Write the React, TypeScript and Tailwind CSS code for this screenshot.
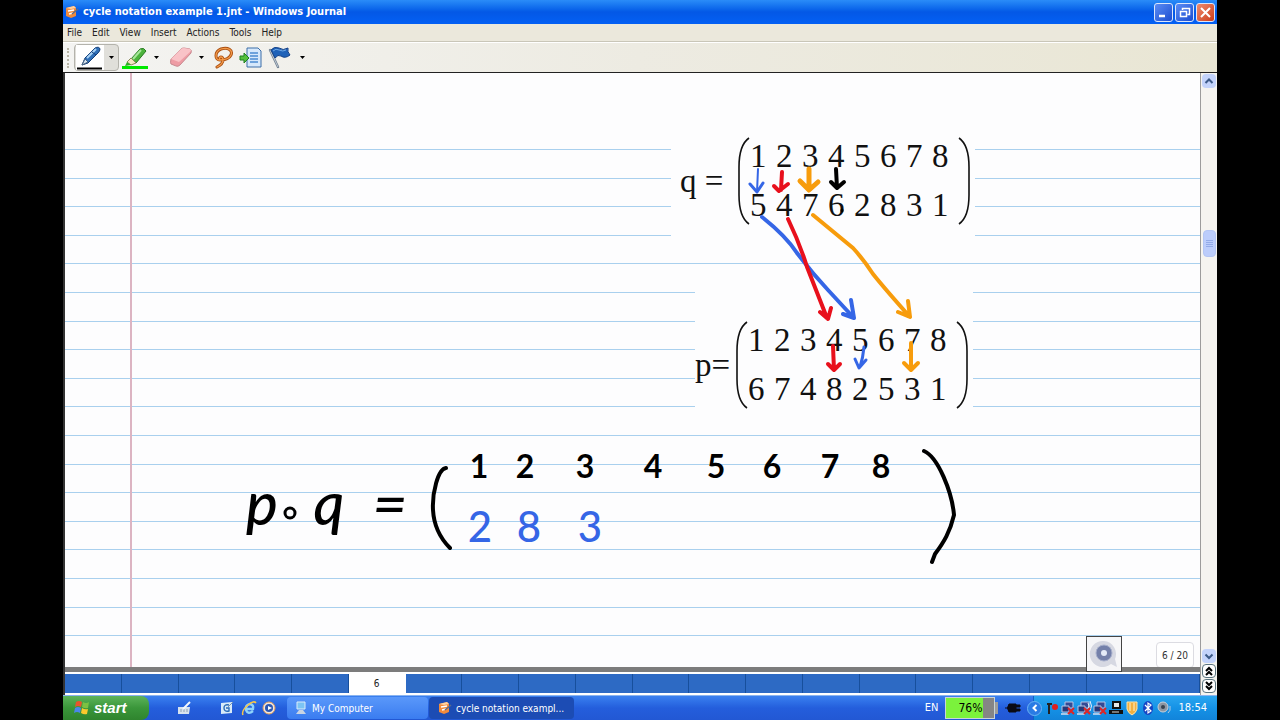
import { useState } from "react"
import type { ReactNode } from "react"
import { clsx } from "clsx"

const menus = ["File", "Edit", "View", "Insert", "Actions", "Tools", "Help"]

const PAGE_COUNT = 20
const RULE_COUNT = 17

const BLUE = "#3566e6"
const RED = "#e8101c"
const ORANGE = "#f79c0c"
const BLACK = "#000000"

interface Stroke {
  color: string
  width: number
  d: string
}

const strokes: Stroke[] = [
  // q: top row to bottom row
  { color: BLUE, width: 2, d: "M758 169L757 192" },
  { color: BLUE, width: 3, d: "M750 184L757 192L763 183" },
  { color: RED, width: 4, d: "M782 172L781 190M774 186L779 191L788 184" },
  { color: ORANGE, width: 5, d: "M809 169V189M800 181L809 190L818 182" },
  { color: BLACK, width: 4, d: "M836 169L837 188M831 182L837 188L844 182" },
  // q down to p
  { color: BLUE, width: 4, d: "M762 217Q786 236 797 253Q812 273 828 290L853 317M843 314L854 318L851 300" },
  { color: RED, width: 4, d: "M788 219Q800 244 807 267L827 318M820 312L828 319L831 308" },
  { color: ORANGE, width: 4, d: "M813 215L853 248Q864 260 873 274Q885 289 910 317M898 312L910 317L908 301" },
  // p: top row to bottom row
  { color: RED, width: 4, d: "M833 346L834 370M828 364L834 370L840 364" },
  { color: BLUE, width: 3, d: "M864 347Q863 358 860 367M855 359L859 368L866 360" },
  { color: ORANGE, width: 4, d: "M911 343V369M904 363L911 370L918 363" },
  // brackets of the result
  { color: BLACK, width: 4, d: "M446 468C438 469 432 493 433 510C434 528 442 540 450 548" },
  { color: BLACK, width: 4, d: "M924 451C938 457 952 492 954 515C950 532 944 542 935 554L932 562" },
  // pen tip
  { color: BLACK, width: 3, d: "M842 210V211" },
]

const topRow = [
  { x: 479, text: "1" },
  { x: 525, text: "2" },
  { x: 585, text: "3" },
  { x: 653, text: "4" },
  { x: 716, text: "5" },
  { x: 772, text: "6" },
  { x: 830, text: "7" },
  { x: 881, text: "8" },
]

const bottomRow = [
  { x: 480, text: "2" },
  { x: 529, text: "8" },
  { x: 590, text: "3" },
]

function TitleIcon() {
  return (
    <svg viewBox="0 0 14 14" className="size-[14px] shrink-0" aria-hidden="true">
      <path d="M1 3L9 1L11 3V11L6 13L1 11Z" fill="#f08a3c" />
      <path d="M1 3L9 1L11 3L6 4Z" fill="#ffd2a0" />
      <path d="M3 6L9 5M4 9L8 8" stroke="#fff" strokeWidth="1.3" />
      <path d="M7 9L13 4" stroke="#5b6c8c" strokeWidth="1.5" />
    </svg>
  )
}

function PenIcon() {
  return (
    <svg viewBox="0 0 28 24" className="h-6 w-7" aria-hidden="true">
      <path d="M6 19L9 12L19 2Q23 0 24 3Q24 5 22 7L12 17Z" fill="#2f6fb8" stroke="#123d78" />
      <path d="M11 12L20 3" stroke="#a9d2f5" strokeWidth="2" />
      <path d="M6 19L9 13L12 16Z" fill="#dce8f2" stroke="#4a6480" />
      <path d="M16 6L20 9" stroke="#123d78" />
      <path d="M1 22.5H26" stroke="#000" strokeWidth="2" />
    </svg>
  )
}

function HighlighterIcon() {
  return (
    <svg viewBox="0 0 28 24" className="h-6 w-7" aria-hidden="true">
      <path d="M10 13L19 3Q23 1 25 5L15 17Z" fill="#4cb33c" stroke="#277a20" />
      <path d="M12 13L20 4" stroke="#a6e69a" strokeWidth="2" />
      <path d="M6 16L10 12L15 17L10 19Z" fill="#f3e8c4" stroke="#8b8a5a" />
      <path d="M4 20L6 16L10 19Z" fill="#2fae26" />
      <path d="M1 21.5H27" stroke="#00e800" strokeWidth="3" />
    </svg>
  )
}

function EraserIcon() {
  return (
    <svg viewBox="0 0 28 24" className="h-6 w-7" aria-hidden="true">
      <path d="M5 13L15 3Q16 2 18 2L24 3Q26 4 25 7L14 19Q12 21 10 20L5 18Q4 17 5 13Z" fill="#ee9ca4" stroke="#c88a90" />
      <path d="M5 13L15 3Q16 2 18 2L24 3Q26 4 24 6L13 16Z" fill="#f9c3c7" />
    </svg>
  )
}

function LassoIcon() {
  return (
    <svg viewBox="0 0 24 24" className="size-6" fill="none" aria-hidden="true">
      <path
        d="M9 14C4 14 3 6 10 3C17 1 22 4 20 9C18 13 14 14 9 14M9 14C7 10 12 10 12 14C12 17 10 19 6 21"
        stroke="#a94e10"
        strokeWidth="3"
        strokeLinecap="round"
      />
      <path
        d="M9 14C4 14 3 6 10 3C17 1 22 4 20 9C18 13 14 14 9 14M9 14C7 10 12 10 12 14C12 17 10 19 6 21"
        stroke="#f39a4a"
        strokeWidth="1.3"
        strokeLinecap="round"
      />
    </svg>
  )
}

function InsertPageIcon() {
  return (
    <svg viewBox="0 0 24 24" className="size-6" aria-hidden="true">
      <path d="M8 2H19L22 5V21H8Z" fill="#d6e8fb" stroke="#3d6ea8" />
      <path d="M11 7H19M11 10H19M11 13H19M11 16H19" stroke="#4b8bd2" strokeWidth="1.5" />
      <path d="M1 10H5V7L10 12L5 17V14H1Z" fill="#54c03c" stroke="#1f8020" />
    </svg>
  )
}

function FlagIcon() {
  return (
    <svg viewBox="0 0 28 24" className="h-6 w-7" aria-hidden="true">
      <path d="M3 4L11 21" stroke="#6f7f90" strokeWidth="2.4" strokeLinecap="round" />
      <path d="M3 4L11 21" stroke="#d4dde6" strokeWidth="0.8" />
      <path d="M4 4Q7 0 12 2Q16 5 21 2Q20 6 23 9Q18 13 14 10Q11 8 8 12Z" fill="#1f62b8" stroke="#123f86" />
      <path d="M6 5Q9 2 12 4Q16 6 19 4" stroke="#6ea8e6" fill="none" />
    </svg>
  )
}

interface ToolButtonProps {
  label: string
  menu?: boolean
  active?: boolean
  children: ReactNode
}

function ToolButton({ label, menu, active, children }: ToolButtonProps) {
  return (
    <button
      type="button"
      aria-label={label}
      aria-pressed={active}
      className={clsx(
        "flex h-[27px] items-center justify-between border pl-px",
        menu ? "w-[45px] pr-1" : "w-7",
        active ? "rounded-sm border-[#b4b3ac] bg-[#e0dfda]" : "border-transparent",
      )}
    >
      <span className={clsx("flex h-full items-center", active && "bg-white")}>{children}</span>
      {menu && (
        <svg viewBox="0 0 5 3" className="h-[3px] w-[5px]" aria-hidden="true">
          <path d="M0 0H5L2.5 3Z" fill="#000" />
        </svg>
      )}
    </button>
  )
}

function WindowButton({ label, close, children }: { label: string; close?: boolean; children: ReactNode }) {
  return (
    <button
      type="button"
      aria-label={label}
      className={clsx(
        "flex size-[19px] items-center justify-center rounded-[3px] border border-[#dbe6fb]",
        close ? "bg-linear-to-br from-[#ee8a6c] to-[#cc3a14]" : "bg-linear-to-br from-[#5c8cf4] to-[#1c4cd0]",
      )}
    >
      <svg viewBox="0 0 13 13" className="size-[13px]" fill="none" stroke="#fff" aria-hidden="true">
        {children}
      </svg>
    </button>
  )
}

function Paren({ right }: { right?: boolean }) {
  return (
    <svg viewBox="0 0 13 88" className="h-[88px] w-[13px] shrink-0" fill="none" stroke="#111" aria-hidden="true">
      <path d={right ? "M1 1Q11 8 11 30V58Q11 80 1 87" : "M12 1Q2 8 2 30V58Q2 80 12 87"} strokeWidth="1.6" />
    </svg>
  )
}

function Permutation({ name, rows, className }: { name: ReactNode; rows: string[]; className: string }) {
  return (
    <div
      className={clsx(
        "absolute flex items-center bg-[#fdfdfe] pt-6 pb-5 font-['Liberation_Serif',serif] text-[33px] leading-[49px] text-[#111]",
        className,
      )}
    >
      {name}
      <Paren />
      <div className="grid grid-cols-[repeat(8,26px)]">
        {rows.map((row) => row.split("").map((digit) => <span key={row + digit}>{digit}</span>))}
      </div>
      <Paren right />
    </div>
  )
}

function Ink() {
  return (
    <svg
      className="absolute inset-0 size-full font-['Lato',sans-serif] font-bold"
      strokeLinecap="round"
      strokeLinejoin="round"
    >
      <g transform="translate(-65 -73)">
        {strokes.map((s) => (
          <path key={s.d} d={s.d} fill="none" stroke={s.color} strokeWidth={s.width} />
        ))}
        <g textAnchor="middle">
          <g className="text-[60px] font-medium italic">
            <text x="262" y="525">p</text>
            <text x="329" y="525">q</text>
            <text x="390" y="525">=</text>
          </g>
          <circle cx="290" cy="513" r="5" fill="none" stroke="#000" strokeWidth="3" />
          <g className="text-[32px]">
            {topRow.map((n) => (
              <text key={n.text} x={n.x} y="478">{n.text}</text>
            ))}
          </g>
          <g className="text-[42px] font-medium" fill={BLUE}>
            {bottomRow.map((n) => (
              <text key={n.text} x={n.x} y="542">{n.text}</text>
            ))}
          </g>
        </g>
      </g>
    </svg>
  )
}

function NotePage({ page }: { page: number }) {
  return (
    <main className="relative min-h-0 flex-1 overflow-hidden bg-[#fdfdfe]">
      <div className="flex h-full flex-col pt-[76px] pb-[31px]">
        {Array.from({ length: RULE_COUNT }, (_, i) => (
          <div key={i} className="flex-1 border-t border-[#a9d0ee]" />
        ))}
        <div className="h-px bg-[#a9d0ee]" />
      </div>
      <div className="absolute inset-y-0 left-[65px] w-[2px] bg-[#dcb4c2]" />
      <Permutation
        className="top-[35px] left-[606px] pr-1 pl-[9px]"
        name={<span className="w-[57px]">q =</span>}
        rows={["12345678", "54762831"]}
      />
      <Permutation
        className="top-[219px] left-[630px] pr-1"
        name={<span className="w-10">p=</span>}
        rows={["12345678", "67482531"]}
      />
      <Ink />
      <div className="absolute right-[6px] -bottom-px flex h-[26px] w-[38px] items-center justify-center rounded-sm border border-[#dcdce2] bg-white text-[10px] text-[#333]">
        {page} / {PAGE_COUNT}
      </div>
    </main>
  )
}

function ScrollButton({ label, d, page }: { label: string; d: string; page?: boolean }) {
  return (
    <button
      type="button"
      aria-label={label}
      className={clsx(
        "flex size-[14px] shrink-0 items-center justify-center rounded-sm",
        page ? "border border-[#5b7480] bg-white" : "bg-[#c3d3fb]",
      )}
    >
      <svg viewBox="0 0 10 10" className="size-[10px] shrink-0" fill="none" stroke={page ? "#000" : "#3c5a88"} strokeWidth="2" aria-hidden="true">
        <path d={d} />
      </svg>
    </button>
  )
}

function ScrollBar() {
  return (
    <div className="flex w-[17px] shrink-0 flex-col items-center border-l border-[#9c9c9c] bg-[#f5f4f0] pt-px pb-[2px]">
      <ScrollButton label="Scroll up" d="M1.5 7L5 3.5L8.5 7" />
      <div className="flex w-full flex-1 flex-col items-center">
        <div className="grow-[142]" />
        <div className="flex h-[27px] w-[13px] flex-col items-center justify-center gap-px rounded-sm border border-[#b4c6f4] bg-[#bccdfb]">
          {[0, 1, 2, 3].map((i) => (
            <span key={i} className="h-px w-[7px] bg-[#93abe8]" />
          ))}
        </div>
        <div className="grow-[392]" />
      </div>
      <ScrollButton label="Scroll down" d="M1.5 3.5L5 7L8.5 3.5" />
      <div className="mt-px flex flex-col gap-px">
        <ScrollButton page label="Previous page" d="M2 5L5 2L8 5M2 9L5 6L8 9" />
        <ScrollButton page label="Next page" d="M2 1L5 4L8 1M2 5L5 8L8 5" />
      </div>
    </div>
  )
}

function StartLogo() {
  return (
    <svg viewBox="0 0 18 18" className="size-[18px]" aria-hidden="true">
      <path d="M3 3Q6 1 9 3L8 8Q5 6 2 8Z" fill="#e8542c" />
      <path d="M10 3Q13 5 16 3L15 9Q12 10 9 8Z" fill="#7cc142" />
      <path d="M2 9Q5 7 8 9L7 14Q4 12 1 14Z" fill="#4a86ea" />
      <path d="M9 9Q12 11 15 10L14 15Q11 16 8 14Z" fill="#fbc82c" />
    </svg>
  )
}

function QuickLaunch() {
  return (
    <div className="flex items-center">
      <button type="button" aria-label="Tablet input panel" className="ml-7">
        <svg viewBox="0 0 16 16" className="size-4" aria-hidden="true">
          <path d="M1 7H13L12 14H1Z" fill="#d6e2ee" />
          <path d="M4 9V12M7 9V12M10 9V12" stroke="#8ca0b4" />
          <path d="M6 9L13 2" stroke="#f4f8fc" strokeWidth="2" />
        </svg>
      </button>
      <button type="button" aria-label="Show desktop" className="ml-[26px]">
        <svg viewBox="0 0 16 16" className="size-4" aria-hidden="true">
          <path d="M2 3L13 2V13L2 14Z" fill="#d8ebf8" />
          <path d="M10 5Q5 4 5 8Q5 12 10 11V8H7" fill="none" stroke="#2a6bb8" strokeWidth="1.4" />
          <path d="M9 7L14 2" stroke="#7a94b0" />
        </svg>
      </button>
      <button type="button" aria-label="Internet Explorer" className="ml-[6px]">
        <svg viewBox="0 0 16 16" className="size-4" fill="none" aria-hidden="true">
          <path d="M12 11Q7 15 5 10Q4 5 9 4Q13 5 12 9H5" stroke="#8fd4fb" strokeWidth="2.4" />
          <path d="M2 15Q0 11 7 5Q13 0 15 3" stroke="#f7c648" strokeWidth="1.5" />
        </svg>
      </button>
      <button type="button" aria-label="Media player" className="ml-1">
        <svg viewBox="0 0 16 16" className="size-4" aria-hidden="true">
          <circle cx="8" cy="8" r="6" fill="#f0e6e0" stroke="#e6a158" />
          <circle cx="8" cy="8" r="4" fill="#2c58b4" />
          <path d="M7 6L11 8L7 10Z" fill="#fff" />
        </svg>
      </button>
    </div>
  )
}

function NetworkIcon({ waves }: { waves?: boolean }) {
  return (
    <svg viewBox="0 0 16 16" className="size-4" fill="none" aria-hidden="true">
      <path d="M5 2H13V8H5Z" fill="#344a94" stroke="#b8c4e4" />
      <path d="M2 6H9V12H2Z" fill="#263878" stroke="#b8c4e4" />
      <path d="M1 14H9" stroke="#d4dcee" strokeWidth="1.5" />
      {waves && <path d="M12 3Q14 6 12 9M14 1Q17 6 14 11" stroke="#e8eefa" />}
      <path d="M8 8L14 14M14 8L8 14" stroke="#e02424" strokeWidth="2" />
    </svg>
  )
}

function Tray() {
  return (
    <div className="ml-auto flex h-full items-center text-[11px] text-white">
      <span>EN</span>
      <div className="ml-[7px] flex h-[22px] w-[50px] border border-[#c8d4d8] bg-[#858585]">
        <span className="w-[37px] bg-[#7bf23c] pl-3 text-[12px] leading-5 text-black">76%</span>
      </div>
      <span className="h-3 w-[3px] bg-[#9c9c9c]" />
      <svg viewBox="0 0 16 16" className="mr-3 ml-[7px] size-4" aria-hidden="true">
        <path d="M4 4H11V12H4Q1 8 4 4M11 5H15V7H11M11 9H15V11H11M0 8H4" fill="#0a0a14" stroke="#0a0a14" />
      </svg>
      <div className="flex h-full items-center border-l border-[#1060c8] bg-linear-to-b from-[#2aa6f0] via-[#1592e6] to-[#1284da] pr-[10px]">
        <button
          type="button"
          aria-label="Show hidden icons"
          className="-ml-[7px] flex size-[15px] items-center justify-center rounded-full border border-[#6cb4f4] bg-[#2a7be4]"
        >
          <svg viewBox="0 0 8 8" className="size-2" fill="none" stroke="#fff" strokeWidth="2" aria-hidden="true">
            <path d="M5.5 1L2.5 4L5.5 7" />
          </svg>
        </button>
        <div className="ml-[2px] flex items-center">
          <svg viewBox="0 0 16 16" className="size-4" aria-hidden="true">
            <path d="M5 3V14M3 4H8" stroke="#222" strokeWidth="2" />
            <circle cx="11" cy="7" r="3" fill="#e01e1e" />
          </svg>
          <NetworkIcon />
          <NetworkIcon waves />
          <NetworkIcon />
          <svg viewBox="0 0 16 16" className="size-4" aria-hidden="true">
            <path d="M5 2H12V8H5Z" fill="#e8e8e8" stroke="#111" strokeWidth="2" />
            <path d="M1 10H15V14H1Z" fill="#111" />
            <path d="M4 12H11" stroke="#ddd" />
          </svg>
          <svg viewBox="0 0 16 16" className="size-4" aria-hidden="true">
            <path d="M3 2H13V9Q12 13 8 15Q4 13 3 9Z" fill="#f0b040" stroke="#fbe6b0" />
            <path d="M6 3V11M10 3V11" stroke="#fff3cc" />
          </svg>
          <svg viewBox="0 0 16 16" className="size-4" fill="none" aria-hidden="true">
            <ellipse cx="8" cy="8" rx="5" ry="7" fill="#1644c4" />
            <path d="M5 5L11 11L8 13V3L11 5L5 11" stroke="#fff" strokeWidth="1.2" />
          </svg>
          <svg viewBox="0 0 16 16" className="size-4" fill="none" aria-hidden="true">
            <circle cx="7" cy="7" r="5" fill="#8c96a2" stroke="#c8d0da" />
            <circle cx="7" cy="7" r="2" fill="#38424e" />
            <path d="M12 13Q15 11 14 6" stroke="#b4c8e0" />
          </svg>
        </div>
        <time className="ml-[6px]">18:54</time>
      </div>
    </div>
  )
}

export default function App() {
  const [page, setPage] = useState(6)

  return (
    <div className="h-screen bg-black px-[63px] font-['DejaVu_Sans_Condensed','DejaVu_Sans',sans-serif]">
      <div className="flex h-full flex-col bg-[#ece9d8] text-[10px]">
        <header className="flex h-6 shrink-0 items-center bg-linear-to-b from-[#2a8cf8] via-[#0458e6] to-[#0460f4] pr-[2px] pl-[2px] text-white">
          <TitleIcon />
          <h1 className="ml-1 text-[11px] font-bold">cycle notation example 1.jnt - Windows Journal</h1>
          <div className="ml-auto flex gap-[2px]">
            <WindowButton label="Minimize">
              <path d="M2 10H8" strokeWidth="2.5" />
            </WindowButton>
            <WindowButton label="Restore">
              <path d="M4.5 4V2.5H11.5V8.5H9.5M2.5 5.5H8.5V10.5H2.5Z" strokeWidth="1.5" />
            </WindowButton>
            <WindowButton label="Close" close>
              <path d="M2 2L11 11M11 2L2 11" strokeWidth="2" />
            </WindowButton>
          </div>
        </header>

        <nav className="flex h-[18px] shrink-0 items-center gap-[10px] border-b border-[#c9c6b8] bg-[#ebe8dc] pl-1 text-[#222]">
          {menus.map((menu) => (
            <button key={menu} type="button">
              {menu}
            </button>
          ))}
        </nav>

        <div className="flex h-[31px] shrink-0 items-center border-t border-b border-t-white border-b-[#222] bg-linear-to-r from-[#f4f4f2] via-[#edebe2] to-[#e9e6d4] pl-1">
          <div className="mr-[5px] h-5 border-l-2 border-dotted border-[#b8b5a6]" />
          <ToolButton label="Pen" menu active>
            <PenIcon />
          </ToolButton>
          <ToolButton label="Highlighter" menu>
            <HighlighterIcon />
          </ToolButton>
          <ToolButton label="Eraser" menu>
            <EraserIcon />
          </ToolButton>
          <ToolButton label="Selection tool">
            <LassoIcon />
          </ToolButton>
          <ToolButton label="Insert space">
            <InsertPageIcon />
          </ToolButton>
          <ToolButton label="Flag" menu>
            <FlagIcon />
          </ToolButton>
        </div>

        <div className="flex min-h-0 flex-1 bg-white">
          <div className="relative flex min-w-0 flex-1 flex-col border-l-2 border-[#333]">
            <NotePage page={page} />
            <div className="h-[5px] shrink-0 bg-[#7c7c7c]" />
            <div className="flex h-[23px] shrink-0 pt-[2px] pb-[2px]">
              {Array.from({ length: PAGE_COUNT }, (_, i) => i + 1).map((n) => (
                <button
                  key={n}
                  type="button"
                  aria-label={`Page ${n}`}
                  onClick={() => setPage(n)}
                  className={clsx(
                    "flex-1 border-r",
                    n === page ? "border-white bg-white text-[#222]" : "border-[#174f9c] bg-[#2d6ac4]",
                  )}
                >
                  {n === page && n}
                </button>
              ))}
            </div>
            <button
              type="button"
              aria-label="Pan"
              className="absolute right-[78px] bottom-[23px] flex size-9 items-center justify-center border border-[#444] bg-[#f6f6f8]"
            >
              <svg viewBox="0 0 30 30" className="size-[30px]" aria-hidden="true">
                <path d="M15 2A13 13 0 1 0 22 25L28 28L26 20A13 13 0 0 0 15 2Z" fill="#d6d8e2" />
                <circle cx="15" cy="14" r="8" fill="#7480aa" stroke="#a8b0cc" />
                <circle cx="15" cy="14" r="3" fill="#e4eaf8" />
              </svg>
            </button>
          </div>
          <ScrollBar />
        </div>

        <footer className="flex h-[25px] shrink-0 items-center border-t border-[#8ab4f0] bg-linear-to-b from-[#3a80f0] via-[#245edc] to-[#2258d4] text-white">
          <button
            type="button"
            className="flex h-full w-[86px] items-center gap-[3px] rounded-r-lg bg-linear-to-b from-[#5cb45a] via-[#3a963a] to-[#2f842e] pl-[10px] font-['Liberation_Sans',sans-serif] text-[15px] font-bold italic"
          >
            <StartLogo />
            start
          </button>
          <QuickLaunch />
          <button
            type="button"
            className="ml-[10px] flex h-[22px] w-[141px] items-center gap-1 rounded-sm bg-linear-to-b from-[#5a98fa] to-[#3a7cf0] pl-[7px]"
          >
            <svg viewBox="0 0 14 14" className="size-[14px]" aria-hidden="true">
              <path d="M3 1H11V8H3Z" fill="#7cc4f4" stroke="#dcecf8" />
              <path d="M5 9H9L12 13H2Z" fill="#c8d4e4" />
            </svg>
            My Computer
          </button>
          <button
            type="button"
            className="ml-px flex h-[22px] w-[145px] items-center gap-1 rounded-sm bg-[#1c4cb4] pl-[9px] whitespace-nowrap"
          >
            <TitleIcon />
            cycle notation exampl...
          </button>
          <Tray />
        </footer>
      </div>
    </div>
  )
}
